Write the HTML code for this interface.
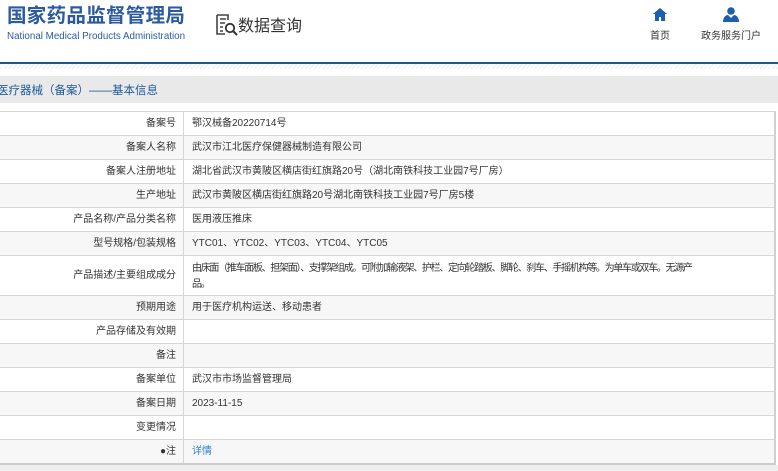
<!DOCTYPE html>
<html><head><meta charset="utf-8"><style>
*{margin:0;padding:0;box-sizing:border-box}
body{width:778px;height:471px;overflow:hidden;background:#fff;font-family:"Liberation Sans","Noto Sans CJK SC",sans-serif;color:#333;position:relative}
.a{position:absolute;white-space:nowrap}
.row{position:absolute;left:0;width:776px;border-bottom:1px solid #d6d6d6;border-right:2px solid #d0d0d0;font-size:10px}
.row.s{background:#f7f7f7}
.l{position:absolute;left:0;width:184px;top:0;bottom:0;border-right:1px solid #d6d6d6;text-align:right;padding-right:7px}
.v{position:absolute;left:192px;top:0}
</style></head><body>
<div class="a" style="left:7px;top:3px;font-size:19.5px;line-height:26px;font-weight:bold;color:#2b5aa3;letter-spacing:0.3px">国家药品监督管理局</div>
<div class="a" style="left:7px;top:31px;font-size:9.8px;line-height:12px;color:#2b5aa3">National Medical Products Administration</div>
<svg class="a" style="left:215px;top:14px" width="24" height="22" viewBox="0 0 24 22"><path d="M2 1h11v5M2 1v19h8" fill="none" stroke="#444" stroke-width="1.6"/><path d="M5 5h6M5 9h5M5 13h3M5 17h3" stroke="#444" stroke-width="1.4"/><circle cx="15" cy="14" r="4.2" fill="none" stroke="#333" stroke-width="1.8"/><path d="M18 17l4 4" stroke="#333" stroke-width="2"/></svg>
<div class="a" style="left:238px;top:12px;font-size:16px;color:#333">数据查询</div>
<svg class="a" style="left:653px;top:8px" width="14" height="13" viewBox="0 0 14 13"><path d="M7 0L0 6h2v7h4V9h2v4h4V6h2z" fill="#1a5fb0"/></svg>
<div class="a" style="left:650px;top:27px;font-size:10px;color:#333">首页</div>
<svg class="a" style="left:723px;top:7px" width="16" height="15" viewBox="0 0 16 15"><circle cx="8" cy="4" r="3.8" fill="#1a5fb0"/><path d="M0 15c0-5 3-7 5-7l3 3 3-3c2 0 5 2 5 7z" fill="#1a5fb0"/></svg>
<div class="a" style="left:701px;top:27px;font-size:10px;color:#333">政务服务门户</div>
<div class="a" style="left:0;top:62px;width:778px;height:2px;background:#1d5a8a"></div>
<div class="a" style="left:0;top:64px;width:778px;height:5px;background:repeating-linear-gradient(135deg,#eee 0 1px,#fff 1px 3px)"></div>
<div class="a" style="left:0;top:76px;width:778px;height:27px;background:#e9e9e9"></div>
<div class="a" style="left:-3px;top:82px;font-size:11.5px;color:#1d5a9a">医疗器械（备案）——基本信息</div>
<div class="a" style="left:0;top:111px;width:776px;height:1px;background:#d6d6d6"></div>
<div class="row" style="top:112px;height:24px"><div class="l" style="line-height:24px">备案号</div><div class="v" style="line-height:24px">鄂汉械备20220714号</div></div>
<div class="row s" style="top:136px;height:24px"><div class="l" style="line-height:24px">备案人名称</div><div class="v" style="line-height:24px">武汉市江北医疗保健器械制造有限公司</div></div>
<div class="row" style="top:160px;height:24px"><div class="l" style="line-height:24px">备案人注册地址</div><div class="v" style="line-height:24px">湖北省武汉市黄陂区横店街红旗路20号（湖北南铁科技工业园7号厂房）</div></div>
<div class="row s" style="top:184px;height:24px"><div class="l" style="line-height:24px">生产地址</div><div class="v" style="line-height:24px">武汉市黄陂区横店街红旗路20号湖北南铁科技工业园7号厂房5楼</div></div>
<div class="row" style="top:208px;height:24px"><div class="l" style="line-height:24px">产品名称/产品分类名称</div><div class="v" style="line-height:24px">医用液压推床</div></div>
<div class="row s" style="top:232px;height:24px"><div class="l" style="line-height:24px">型号规格/包装规格</div><div class="v" style="line-height:24px">YTC01、YTC02、YTC03、YTC04、YTC05</div></div>
<div class="row" style="top:256px;height:40px"><div class="l" style="line-height:40px">产品描述/主要组成成分</div><div class="v" style="top:5px;line-height:16px;white-space:nowrap;letter-spacing:-1.3px">由床面（推车面板、担架面）、支撑架组成。可附加输液架、护栏、定向轮踏板、脚轮、刹车、手摇机构等。为单车或双车。无源产<br>品。</div></div>
<div class="row s" style="top:296px;height:24px"><div class="l" style="line-height:24px">预期用途</div><div class="v" style="line-height:24px">用于医疗机构运送、移动患者</div></div>
<div class="row" style="top:320px;height:24px"><div class="l" style="line-height:24px">产品存储及有效期</div></div>
<div class="row s" style="top:344px;height:24px"><div class="l" style="line-height:24px">备注</div></div>
<div class="row" style="top:368px;height:24px"><div class="l" style="line-height:24px">备案单位</div><div class="v" style="line-height:24px">武汉市市场监督管理局</div></div>
<div class="row s" style="top:392px;height:24px"><div class="l" style="line-height:24px">备案日期</div><div class="v" style="line-height:24px">2023-11-15</div></div>
<div class="row" style="top:416px;height:24px"><div class="l" style="line-height:24px">变更情况</div></div>
<div class="row s" style="top:440px;height:25px;border-bottom:2px solid #ccc"><div class="l" style="line-height:24px">●注</div><div class="v" style="line-height:24px;color:#2d7fd6">详情</div></div>
<div class="a" style="left:0;top:465px;width:778px;height:6px;background:#eee"></div>
</body></html>
